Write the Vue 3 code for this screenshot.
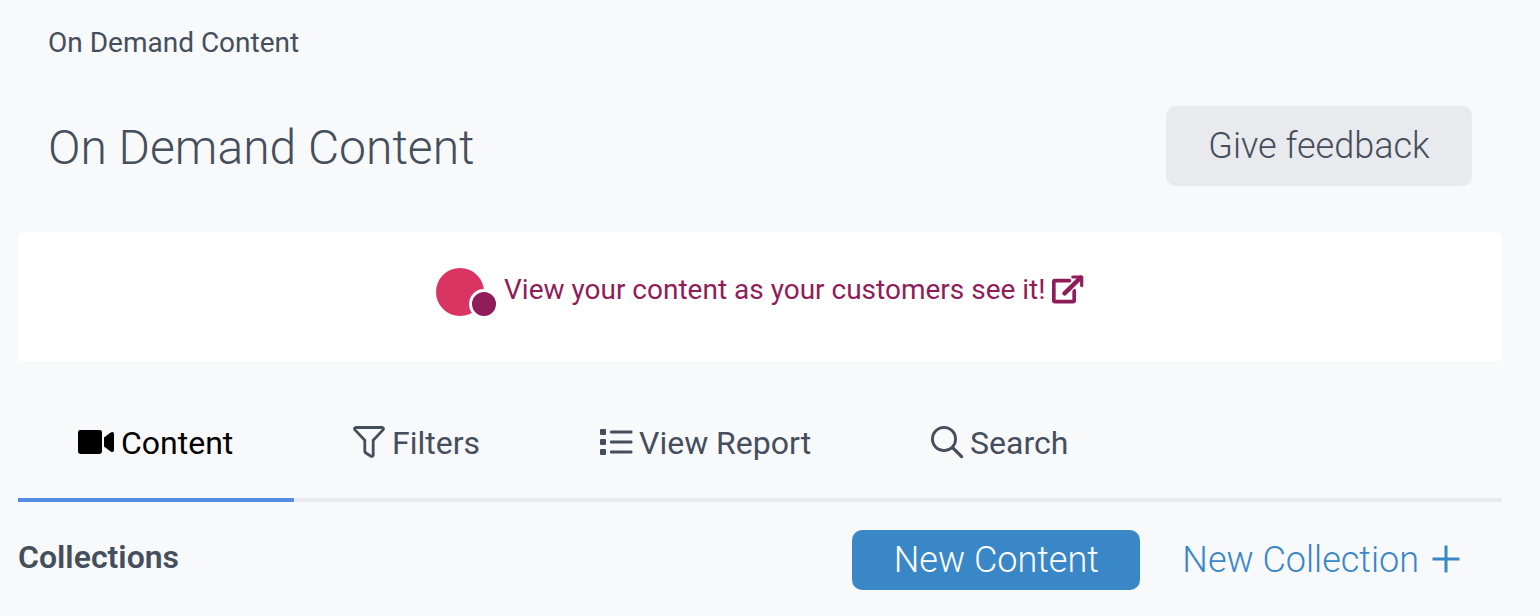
<template>
  <div class="page">
    <nav class="breadcrumb">
      <span>On Demand Content</span>
    </nav>

    <header class="page-header">
      <h1 class="title">On Demand Content</h1>
      <button class="btn btn-feedback" type="button">Give feedback</button>
    </header>

    <div class="banner">
      <a class="banner-link" href="#" @click.prevent>
        <svg class="banner-logo" width="60" height="48" viewBox="0 0 60 48">
          <circle cx="24" cy="24" r="24" fill="#da3462" />
          <circle cx="48" cy="36" r="13.5" fill="#911c5a" stroke="#fff" stroke-width="3" />
        </svg>
        <span class="banner-text">View your content as your customers see it!</span>
        <svg class="banner-external" width="32" height="30" viewBox="0 0 32 30">
          <g fill="none" stroke="currentColor">
            <path
              d="M17.5 5.600H3a1.200 1.200 0 0 0-1.200 1.200V25.400a1.200 1.200 0 0 0 1.200 1.200H21a1.200 1.200 0 0 0 1.200-1.200V15.500"
              stroke-width="3.700"
              stroke-linecap="round"
            />
            <path d="M12.600 18.400L28 3" stroke="#fff" stroke-width="7" />
            <path d="M12.600 18.400L28.600 2.600" stroke-width="4.400" stroke-linecap="round" />
            <path d="M20.800 2H29.700V10.600" stroke-width="3.200" stroke-linecap="round" stroke-linejoin="round" />
          </g>
        </svg>
      </a>
    </div>

    <ul class="tabs">
      <li
        v-for="tab in tabs"
        :key="tab.id"
        class="tab"
        :class="[`tab-${tab.id}`, { active: tab.id === activeTab }]"
        @click="activeTab = tab.id"
      >
        <svg v-if="tab.id === 'content'" class="tab-icon" width="36" height="32" viewBox="0 0 36 32">
          <rect x="0" y="4" width="24" height="24" rx="2.4" fill="currentColor" />
          <path d="M26 11.600l6.600-5q3.400-1.600 3.400 1.400v16q0 3-3.400 1.400L26 20.400z" fill="currentColor" />
        </svg>
        <svg v-else-if="tab.id === 'filters'" class="tab-icon" width="32" height="32" viewBox="0 0 32 32">
          <path
            d="M2.600 1.500H29.400Q31.300 2 30 3.900L20.200 14.300V29.200Q19.600 31.200 17.600 30L12.600 26.800Q11.800 26.200 11.800 25.200V14.300L2 3.900Q.7 2 2.600 1.500z"
            fill="none"
            stroke="currentColor"
            stroke-width="2.8"
            stroke-linejoin="round"
          />
        </svg>
        <svg v-else-if="tab.id === 'report'" class="tab-icon" width="32" height="32" viewBox="0 0 32 32">
          <g fill="currentColor">
            <rect x="0" y="3" width="6" height="6" rx="1" />
            <rect x="0" y="13" width="6" height="6" rx="1" />
            <rect x="0" y="23" width="6" height="6" rx="1" />
            <rect x="10" y="4.6" width="22.4" height="2.8" rx="1" />
            <rect x="10" y="14.6" width="22.4" height="2.8" rx="1" />
            <rect x="10" y="24.6" width="22.4" height="2.8" rx="1" />
          </g>
        </svg>
        <svg v-else class="tab-icon" width="32" height="32" viewBox="0 0 32 32">
          <circle cx="13" cy="13" r="11.6" fill="none" stroke="currentColor" stroke-width="2.8" />
          <path d="M21.600 21.600L30.600 30.600" fill="none" stroke="currentColor" stroke-width="3.2" stroke-linecap="round" />
        </svg>
        <span>{{ tab.label }}</span>
      </li>
    </ul>

    <section class="collections">
      <h2 class="collections-title">Collections</h2>
      <div class="actions">
        <button class="btn btn-primary" type="button">New Content</button>
        <button class="btn btn-link" type="button">
          <span>New Collection</span>
          <svg class="plus" width="28" height="28" viewBox="0 0 28 28">
            <path d="M14 0.500V27.500M0.500 14H27.500" fill="none" stroke="currentColor" stroke-width="3" />
          </svg>
        </button>
      </div>
    </section>
  </div>
</template>

<script setup>
import { ref } from 'vue'

const activeTab = ref('content')

const tabs = [
  { id: 'content', label: 'Content' },
  { id: 'filters', label: 'Filters' },
  { id: 'report', label: 'View Report' },
  { id: 'search', label: 'Search' }
]
</script>

<style>
body {
  background: #f8f9fb;
}
</style>

<style scoped>
.page {
  box-sizing: border-box;
  height: 616px;
  padding: 27px 38px 0 18px;
  overflow: hidden;
  background: #f8f9fb;
  color: #454e5d;
  font-family: Roboto, sans-serif;
}

.breadcrumb {
  padding-left: 30px;
  font-size: 28px;
  line-height: 32px;
}

.page-header {
  display: flex;
  align-items: center;
  justify-content: space-between;
  margin-top: 47px;
  padding: 0 30px;
}

.title {
  margin: 4px 0 0;
  font-size: 48px;
  font-weight: 300;
  line-height: 60px;
}

.btn {
  display: flex;
  align-items: center;
  justify-content: center;
  box-sizing: border-box;
  height: 60px;
  padding: 0;
  border: 0;
  border-radius: 10px;
  background: none;
  color: inherit;
  font-family: inherit;
  font-size: 36px;
  font-weight: 300;
  line-height: 60px;
  white-space: nowrap;
  cursor: pointer;
}

.btn-feedback {
  width: 306px;
  height: 80px;
  background: #e9eaed;
}

.banner {
  display: flex;
  justify-content: center;
  box-sizing: border-box;
  height: 130px;
  margin-top: 46px;
  padding-top: 36px;
  border-radius: 6px;
  background: #fff;
}

.banner-link {
  display: flex;
  align-items: flex-start;
  width: 648px;
  height: 48px;
  color: #911c5a;
  font-size: 28px;
  line-height: 44px;
  text-decoration: none;
  white-space: nowrap;
}

.banner-logo {
  flex: none;
  margin-right: 8px;
  overflow: visible;
}

.banner-external {
  flex: none;
  margin: 7px 0 0 auto;
}

.tabs {
  display: flex;
  height: 140px;
  box-sizing: border-box;
  margin: 0;
  padding: 0;
  border-bottom: 4px solid #e9eaed;
  list-style: none;
}

.tab {
  display: flex;
  align-items: flex-start;
  box-sizing: border-box;
  height: 140px;
  padding: 62px 0 0 60px;
  border-bottom: 4px solid transparent;
  font-size: 32px;
  line-height: 38px;
  white-space: nowrap;
  cursor: pointer;
}

.tab.active {
  border-bottom-color: #548de4;
  color: #000;
}

.tab-content {
  width: 276px;
}

.tab-filters {
  width: 246px;
  padding-left: 59px;
}

.tab-report {
  width: 331px;
}

.tab-icon {
  flex: none;
  margin: 2px 7px 0 0;
  overflow: visible;
}

.collections {
  display: flex;
  align-items: flex-start;
  justify-content: space-between;
  padding-top: 28px;
}

.collections-title {
  margin: 8px 0 0;
  font-size: 32px;
  font-weight: 600;
  line-height: 38px;
}

.actions {
  display: flex;
}

.btn-primary {
  width: 288px;
  background: #3a87c8;
  color: #fff;
}

.btn-link {
  gap: 13px;
  margin-left: 42px;
  padding-right: 42px;
  color: #3a87c8;
}

.plus {
  margin-bottom: 2px;
}
</style>
